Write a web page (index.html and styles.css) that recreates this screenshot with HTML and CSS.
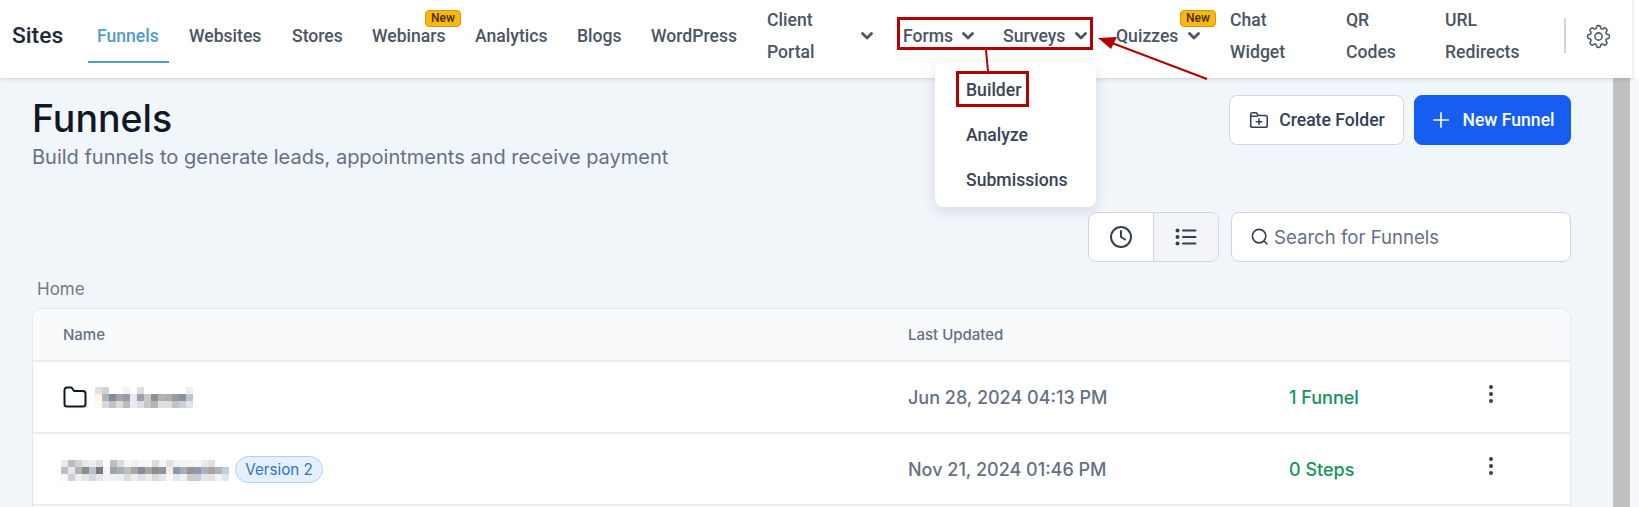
FILE: index.html
```html
<!DOCTYPE html>
<html lang="en">
<head>
<meta charset="utf-8">
<title>Sites - Funnels</title>
<link rel="stylesheet" href="styles.css">
</head>
<body>
<div class="shell">
  <header class="topbar">
    <div class="brand">Sites</div>
    <nav class="nav">
      <a class="nav-item active w-funnels">Funnels</a>
      <a class="nav-item w-websites">Websites</a>
      <a class="nav-item w-stores">Stores</a>
      <a class="nav-item w-webinars">Webinars<span class="new-badge">New</span></a>
      <a class="nav-item w-analytics">Analytics</a>
      <a class="nav-item w-blogs">Blogs</a>
      <a class="nav-item w-wordpress">WordPress</a>
      <a class="nav-item w-client"><span class="wrap-label">Client<br>Portal</span><svg class="chev" viewBox="0 0 12 8"><path d="M1.5 1.5 6 6l4.5-4.5"/></svg></a>
      <a class="nav-item w-forms">Forms<svg class="chev" viewBox="0 0 12 8"><path d="M1.5 1.5 6 6l4.5-4.5"/></svg></a>
      <a class="nav-item w-surveys">Surveys<svg class="chev" viewBox="0 0 12 8"><path d="M1.5 1.5 6 6l4.5-4.5"/></svg></a>
      <a class="nav-item w-quizzes">Quizzes<svg class="chev" viewBox="0 0 12 8"><path d="M1.5 1.5 6 6l4.5-4.5"/></svg><span class="new-badge quiz-badge">New</span></a>
      <a class="nav-item w-chat"><span class="wrap-label">Chat<br>Widget</span></a>
      <a class="nav-item w-qr"><span class="wrap-label">QR<br>Codes</span></a>
      <a class="nav-item w-url"><span class="wrap-label">URL<br>Redirects</span></a>
    </nav>
    <div class="divider"></div>
    <svg class="gear" viewBox="0 0 24 24"><path d="M10.343 3.94c.09-.542.56-.94 1.11-.94h1.093c.55 0 1.02.398 1.11.94l.149.894c.07.424.384.764.78.93.398.164.855.142 1.205-.108l.737-.527a1.125 1.125 0 0 1 1.45.12l.773.774c.39.389.44 1.002.12 1.45l-.527.737c-.25.35-.272.806-.107 1.204.165.397.505.71.93.78l.893.15c.543.09.94.56.94 1.109v1.094c0 .55-.397 1.02-.94 1.11l-.893.149c-.425.07-.765.383-.93.78-.165.398-.143.854.107 1.204l.527.738c.32.447.269 1.06-.12 1.45l-.774.773a1.125 1.125 0 0 1-1.449.12l-.738-.527c-.35-.25-.806-.272-1.203-.107-.397.165-.71.505-.781.929l-.149.894c-.09.542-.56.94-1.11.94h-1.094c-.55 0-1.019-.398-1.11-.94l-.148-.894c-.071-.424-.384-.764-.781-.93-.398-.164-.854-.142-1.204.108l-.738.527c-.447.32-1.06.269-1.45-.12l-.773-.774a1.125 1.125 0 0 1-.12-1.45l.527-.737c.25-.35.273-.806.108-1.204-.165-.397-.505-.71-.93-.78l-.894-.15c-.542-.09-.94-.56-.94-1.11v-1.094c0-.55.398-1.02.94-1.11l.894-.149c.424-.07.765-.383.93-.78.165-.398.143-.854-.107-1.204l-.527-.738a1.125 1.125 0 0 1 .12-1.45l.773-.773a1.125 1.125 0 0 1 1.45-.12l.737.527c.35.25.807.272 1.204.107.397-.165.71-.505.78-.929l.15-.894Z"/><circle cx="12" cy="12" r="3"/></svg>
  </header>

  <div class="below">
    <main class="content">
      <section class="title-row">
        <div class="titles">
          <h1>Funnels</h1>
          <p>Build funnels to generate leads, appointments and receive payment</p>
        </div>
        <div class="actions">
          <button class="btn btn-light"><svg class="btn-icon" viewBox="0 0 24 24"><path d="M3 8V6a2 2 0 0 1 2-2h4l2.5 3H19a2 2 0 0 1 2 2v9a2 2 0 0 1-2 2H5a2 2 0 0 1-2-2V8Zm0 0h6.5l2-1M12 11v6M9 14h6"/></svg>Create Folder</button>
          <button class="btn btn-primary"><svg class="btn-icon" viewBox="0 0 24 24"><path d="M12 4v16M4 12h16"/></svg>New Funnel</button>
        </div>
      </section>

      <section class="tools-row">
        <div class="toggle">
          <span class="toggle-cell"><svg class="tool-icon" viewBox="0 0 24 24"><circle cx="12" cy="12" r="10"/><path d="M12 6v6l4 2.5"/></svg></span>
          <span class="toggle-cell selected"><svg class="tool-icon list-icon" viewBox="0 0 24 24"><path d="M9 5.500h12.500M9 12h12.500M9 18.500h12.500"/><circle class="dot" cx="3.500" cy="5.500" r="2"/><circle class="dot" cx="3.500" cy="12" r="2"/><circle class="dot" cx="3.500" cy="18.500" r="2"/></svg></span>
        </div>
        <div class="search"><svg class="search-icon" viewBox="0 0 24 24"><circle cx="11.500" cy="11.500" r="8.500"/><path d="m18 18 3.500 3.500"/></svg><span>Search for Funnels</span></div>
      </section>

      <div class="crumb">Home</div>

      <section class="table">
        <div class="row head"><span class="col-name">Name</span><span class="col-date">Last Updated</span></div>
        <div class="row">
          <span class="col-name name-cell">
            <svg class="folder" viewBox="0 0 24 22"><path d="M1.500 5V4a2.500 2.500 0 0 1 2.500-2.500h4.500L11 5h9a2.500 2.500 0 0 1 2.500 2.500v10.500a2.500 2.500 0 0 1-2.500 2.500H4a2.500 2.500 0 0 1-2.500-2.500V5Z"/></svg>
            <svg class="mosaic m1" viewBox="0 0 14 3" shape-rendering="crispEdges">
              <rect x="0" y="0" width="1" height="1" fill="#e0e0e0"/><rect x="1" y="0" width="1" height="1" fill="#cfd3d8"/><rect x="4" y="0" width="1" height="1" fill="#f5f3f2"/><rect x="6" y="0" width="1" height="1" fill="#dddddd"/><rect x="13" y="0" width="1" height="1" fill="#efefef"/>
              <rect x="0" y="1" width="1" height="1" fill="#fff5ea"/><rect x="1" y="1" width="1" height="1" fill="#aeb4bb"/><rect x="2" y="1" width="1" height="1" fill="#858a96"/><rect x="3" y="1" width="1" height="1" fill="#a3a5aa"/><rect x="4" y="1" width="1" height="1" fill="#9e9c9e"/><rect x="5" y="1" width="1" height="1" fill="#e2ebf3"/><rect x="6" y="1" width="1" height="1" fill="#a0a2a6"/><rect x="7" y="1" width="1" height="1" fill="#c9c9c9"/><rect x="8" y="1" width="1" height="1" fill="#8e9095"/><rect x="9" y="1" width="1" height="1" fill="#b0b5bb"/><rect x="10" y="1" width="1" height="1" fill="#adadb0"/><rect x="11" y="1" width="1" height="1" fill="#9a9ca2"/><rect x="12" y="1" width="1" height="1" fill="#8a93a0"/><rect x="13" y="1" width="1" height="1" fill="#c2c5c8"/>
              <rect x="0" y="2" width="1" height="1" fill="#fff8f0"/><rect x="1" y="2" width="1" height="1" fill="#d5d8dc"/><rect x="2" y="2" width="1" height="1" fill="#bcc0c8"/><rect x="3" y="2" width="1" height="1" fill="#dcdcdc"/><rect x="4" y="2" width="1" height="1" fill="#bdbbbc"/><rect x="5" y="2" width="1" height="1" fill="#e6eef5"/><rect x="6" y="2" width="1" height="1" fill="#dedede"/><rect x="7" y="2" width="1" height="1" fill="#c7c7c9"/><rect x="8" y="2" width="1" height="1" fill="#b0b5ba"/><rect x="9" y="2" width="1" height="1" fill="#e0e0e2"/><rect x="10" y="2" width="1" height="1" fill="#dfdfdf"/><rect x="11" y="2" width="1" height="1" fill="#c3c2c2"/><rect x="12" y="2" width="1" height="1" fill="#c9d0d6"/><rect x="13" y="2" width="1" height="1" fill="#e3e4e6"/>
            </svg>
          </span>
          <span class="col-date date-cell">Jun 28, 2024 04:13 PM</span>
          <span class="col-count">1 Funnel</span>
          <svg class="more" viewBox="0 0 6 20"><circle cx="3" cy="3" r="2"/><circle cx="3" cy="10" r="2"/><circle cx="3" cy="17" r="2"/></svg>
        </div>
        <div class="row">
          <span class="col-name name-cell tight">
            <svg class="mosaic m2" viewBox="0 0 24 3" shape-rendering="crispEdges">
              <rect x="0" y="0" width="1" height="1" fill="#e8e8e8"/><rect x="1" y="0" width="1" height="1" fill="#b8bcc2"/><rect x="2" y="0" width="1" height="1" fill="#d0d5dc"/><rect x="3" y="0" width="1" height="1" fill="#e6e8ea"/><rect x="4" y="0" width="1" height="1" fill="#eeeeee"/><rect x="5" y="0" width="1" height="1" fill="#dcdde0"/><rect x="7" y="0" width="1" height="1" fill="#bcbec2"/><rect x="8" y="0" width="1" height="1" fill="#d8dde2"/><rect x="9" y="0" width="1" height="1" fill="#f7f7f7"/><rect x="10" y="0" width="1" height="1" fill="#f0f0f0"/><rect x="11" y="0" width="1" height="1" fill="#f8f8f8"/><rect x="12" y="0" width="1" height="1" fill="#f6f6f6"/><rect x="13" y="0" width="1" height="1" fill="#dcdcdc"/><rect x="14" y="0" width="1" height="1" fill="#fbf4ec"/><rect x="15" y="0" width="1" height="1" fill="#d8e2ea"/><rect x="16" y="0" width="1" height="1" fill="#f0f2f4"/><rect x="17" y="0" width="1" height="1" fill="#f4f4f4"/><rect x="18" y="0" width="1" height="1" fill="#f6f6f6"/><rect x="19" y="0" width="1" height="1" fill="#f8f8f8"/><rect x="20" y="0" width="1" height="1" fill="#ece8e6"/><rect x="21" y="0" width="1" height="1" fill="#dbe0e6"/>
              <rect x="0" y="1" width="1" height="1" fill="#c0bec2"/><rect x="1" y="1" width="1" height="1" fill="#e8e8ea"/><rect x="2" y="1" width="1" height="1" fill="#aeb2ba"/><rect x="3" y="1" width="1" height="1" fill="#8a8c92"/><rect x="4" y="1" width="1" height="1" fill="#b8c2cc"/><rect x="5" y="1" width="1" height="1" fill="#787a80"/><rect x="6" y="1" width="1" height="1" fill="#f2f6f9"/><rect x="7" y="1" width="1" height="1" fill="#a0a2a8"/><rect x="8" y="1" width="1" height="1" fill="#acb0b4"/><rect x="9" y="1" width="1" height="1" fill="#bcc0c4"/><rect x="10" y="1" width="1" height="1" fill="#a8a6a6"/><rect x="11" y="1" width="1" height="1" fill="#868c9a"/><rect x="12" y="1" width="1" height="1" fill="#a4a6a8"/><rect x="13" y="1" width="1" height="1" fill="#8e8e90"/><rect x="14" y="1" width="1" height="1" fill="#9094a4"/><rect x="15" y="1" width="1" height="1" fill="#f6ede2"/><rect x="16" y="1" width="1" height="1" fill="#8e98a8"/><rect x="17" y="1" width="1" height="1" fill="#a8aeb6"/><rect x="18" y="1" width="1" height="1" fill="#989494"/><rect x="19" y="1" width="1" height="1" fill="#9498a8"/><rect x="20" y="1" width="1" height="1" fill="#acb2ba"/><rect x="21" y="1" width="1" height="1" fill="#aaa4a2"/><rect x="22" y="1" width="1" height="1" fill="#b0b4bc"/><rect x="23" y="1" width="1" height="1" fill="#c0cfdc"/>
              <rect x="0" y="2" width="1" height="1" fill="#fbf8f4"/><rect x="1" y="2" width="1" height="1" fill="#cdd0d5"/><rect x="2" y="2" width="1" height="1" fill="#eeeeee"/><rect x="3" y="2" width="1" height="1" fill="#e8e6e4"/><rect x="4" y="2" width="1" height="1" fill="#d2d8de"/><rect x="5" y="2" width="1" height="1" fill="#e6e6e8"/><rect x="6" y="2" width="1" height="1" fill="#f0f3f7"/><rect x="7" y="2" width="1" height="1" fill="#eef0f4"/><rect x="8" y="2" width="1" height="1" fill="#f0eeec"/><rect x="9" y="2" width="1" height="1" fill="#d6dde2"/><rect x="10" y="2" width="1" height="1" fill="#ececec"/><rect x="11" y="2" width="1" height="1" fill="#dde1e8"/><rect x="12" y="2" width="1" height="1" fill="#ececec"/><rect x="13" y="2" width="1" height="1" fill="#d8d8d8"/><rect x="14" y="2" width="1" height="1" fill="#e4e8ee"/><rect x="15" y="2" width="1" height="1" fill="#fdf9f4"/><rect x="16" y="2" width="1" height="1" fill="#e4e8ec"/><rect x="17" y="2" width="1" height="1" fill="#eef0f2"/><rect x="18" y="2" width="1" height="1" fill="#d0ccc6"/><rect x="19" y="2" width="1" height="1" fill="#c4cfda"/><rect x="20" y="2" width="1" height="1" fill="#e6e6e8"/><rect x="21" y="2" width="1" height="1" fill="#e4e2e4"/><rect x="22" y="2" width="1" height="1" fill="#f4f4f4"/><rect x="23" y="2" width="1" height="1" fill="#dfe5ea"/>
            </svg>
            <span class="version">Version 2</span>
          </span>
          <span class="col-date date-cell">Nov 21, 2024 01:46 PM</span>
          <span class="col-count">0 Steps</span>
          <svg class="more" viewBox="0 0 6 20"><circle cx="3" cy="3" r="2"/><circle cx="3" cy="10" r="2"/><circle cx="3" cy="17" r="2"/></svg>
        </div>
      </section>
    </main>
    <div class="scrollbar"></div>
    <div class="gutter"></div>
  </div>
</div>

<div class="dropdown">
  <a class="drop-item">Builder</a>
  <a class="drop-item">Analyze</a>
  <a class="drop-item">Submissions</a>
</div>

<div class="mark mark-tabs"></div>
<div class="mark mark-builder"></div>
<svg class="annot" viewBox="0 0 1639 507">
  <path class="annot-line" d="M986 50 988 71"/>
  <path class="annot-line" d="M1207 79 1112 43"/>
  <path class="annot-head" d="M1098 38 1117 37 1111 49Z"/>
</svg>
</body>
</html>
```
FILE: styles.css
```css
* { box-sizing: border-box; }
html, body { margin: 0; height: 507px; overflow: hidden; background: #fff; }
body { font-family: Roboto, "Liberation Sans", sans-serif; position: relative; }
.shell { display: flex; flex-direction: column; height: 507px; }

.topbar {
  flex: 0 0 78px; width: 1632px; display: flex; align-items: center; position: relative; z-index: 2;
  background: #fff; box-shadow: 0 1px 4px rgba(60, 70, 85, .22); padding-left: 12px;
}
.brand { font-size: 22.800px; font-weight: 500; color: #1f2937; width: 76px; margin-top: -7px; }
.nav { display: flex; align-items: center; height: 78px; font-size: 17.600px; font-weight: 500; color: #4b5563; }
.nav-item { position: relative; display: flex; align-items: center; height: 78px; padding: 0 0 7px 9px; white-space: nowrap; }
.nav-item.active { color: #4f9dcc; }
.nav-item.active::after { content: ""; position: absolute; left: 0; right: 0; top: 61px; height: 2px; background: #4f9dcc; }
.w-funnels { width: 81px; }
.w-websites { margin-left: 11px; width: 91px; }
.w-stores { margin-left: 12px; width: 68px; }
.w-webinars { margin-left: 12px; width: 91px; }
.w-analytics { margin-left: 12px; width: 90px; }
.w-blogs { margin-left: 12px; width: 62px; }
.w-wordpress { margin-left: 12px; width: 104px; }
.w-client { margin-left: 12px; width: 126px; }
.w-forms { margin-left: 10px; width: 100px; }
.w-surveys { width: 113px; }
.w-quizzes { width: 114px; }
.w-chat { margin-left: 0; width: 116px; }
.w-qr { width: 99px; }
.w-url { width: 120px; }
.wrap-label { line-height: 32px; }
.w-client .chev { position: absolute; left: 103px; }
.w-forms .chev { margin-left: 9px; }
.w-surveys .chev { margin-left: 10px; }
.w-quizzes .chev { margin-left: 10px; }
.chev { width: 12px; height: 8px; fill: none; stroke: #4b5563; stroke-width: 2.800; stroke-linecap: round; stroke-linejoin: round; }
.new-badge {
  position: absolute; left: 62px; top: 10px; width: 36px; height: 17px; border: 1px solid #d29a08; border-radius: 4px;
  background: #fdb60d; color: #3c3205; font-size: 12px; font-weight: 500; line-height: 15px; text-align: center;
}
.quiz-badge { left: 73px; }
.divider { position: absolute; left: 1564px; top: 18px; width: 2px; height: 35px; background: #d1d5db; }
.gear { position: absolute; left: 1584px; top: 22px; width: 29px; height: 29px; fill: none; stroke: #4b5563; stroke-width: 1.250; }

.below { flex: 1; display: flex; min-height: 0; }
.content { flex: 0 0 1613px; background: #f1f6fa; padding: 0 42px 0 32px; display: flex; flex-direction: column; }
.scrollbar { flex: 0 0 17px; background: #c0c0c0; }
.gutter { flex: 1; background: #f5f7fa; }

.title-row { display: flex; justify-content: space-between; padding-top: 19px; height: 134px; }
.titles h1 { margin: 0; font: 500 37.500px/44px Inter, sans-serif; color: #101828; }
.titles p { margin: 4px 0 0; font: 400 20px/24px Inter, sans-serif; color: #667085; }
.actions { display: flex; gap: 10px; margin-top: -2px; }
.btn { height: 50px; display: flex; align-items: center; justify-content: center; border-radius: 8px; font: 500 17.600px Roboto, sans-serif; cursor: pointer; }
.btn-light { width: 175px; background: #fff; color: #344054; border: 1px solid #d0d5dd; }
.btn-primary { width: 157px; background: #155eef; color: #fff; border: 1px solid #155eef; }
.btn-icon { width: 22px; height: 22px; margin-right: 9px; fill: none; stroke: currentColor; stroke-width: 1.700; stroke-linecap: round; stroke-linejoin: round; }
.btn-primary .btn-icon { margin-right: 10px; }

.tools-row { display: flex; justify-content: flex-end; gap: 12px; height: 50px; }
.toggle { display: flex; width: 131px; height: 50px; border: 1px solid #d0d5dd; border-radius: 8px; overflow: hidden; background: #fff; }
.toggle-cell { flex: 1; display: flex; align-items: center; justify-content: center; }
.toggle-cell.selected { background: #f2f4f7; border-left: 1px solid #d0d5dd; }
.tool-icon { width: 24px; height: 24px; fill: none; stroke: #344054; stroke-width: 2; stroke-linecap: round; stroke-linejoin: round; }
.list-icon .dot { fill: #344054; stroke: none; }
.search { width: 340px; height: 50px; display: flex; align-items: center; padding: 0 0 1px 18px; background: #fff; border: 1px solid #d0d5dd; border-radius: 8px; font: 400 18.600px Inter, sans-serif; color: #667085; }
.search-icon { width: 19px; height: 19px; margin-right: 5px; fill: none; stroke: #344054; stroke-width: 2; stroke-linecap: round; }

.crumb { margin: 15px 0 0 5px; font: 400 17px/24px Inter, sans-serif; color: #7a7a7a; height: 18px; }
.table { margin-top: 13px; background: #fff; border: 1px solid #e4e7ec; border-bottom: 0; border-radius: 10px 10px 0 0; overflow: hidden; flex: 1; }
.row { position: relative; display: flex; align-items: center; height: 72px; border-bottom: 2px solid #eaecf0; }
.row.head { height: 53px; background: #f9fafb; font: 500 15px Inter, sans-serif; color: #667085; }
.col-name { width: 875px; padding-left: 30px; flex: none; }
.name-cell { display: flex; align-items: center; }
.name-cell.tight { padding-left: 28px; }
.folder { width: 24px; height: 22px; margin-right: 8px; fill: none; stroke: #101828; stroke-width: 2; stroke-linejoin: round; }
.mosaic { display: block; height: 21px; }
.m1 { width: 98px; }
.m2 { width: 168px; margin-top: 3px; }
.version { margin-left: 6px; height: 27px; width: 88px; border: 1px solid #b2d0f2; border-radius: 14px; background: #e6f0fc; color: #2f74c8; font: 400 15.200px/25px Inter, sans-serif; text-align: center; }
.col-date { width: 381px; flex: none; }
.date-cell { font: 500 18px Inter, sans-serif; color: #667085; }
.col-count { font: 500 18px Inter, sans-serif; color: #16935c; }
.more { position: absolute; left: 1455px; top: 22px; width: 6px; height: 20px; fill: #344054; }

.dropdown {
  position: absolute; left: 935px; top: 62px; width: 161px; height: 145px; z-index: 3; background: #fff; border-radius: 8px;
  box-shadow: 0 4px 14px rgba(60, 70, 85, .16); padding: 6px 0 0 31px; display: flex; flex-direction: column;
}
.drop-item { height: 45px; line-height: 45px; font-size: 17.600px; font-weight: 500; color: #3a4454; }

.mark { position: absolute; z-index: 4; border: 3px solid #b30000; pointer-events: none; }
.mark-tabs { left: 897px; top: 17px; width: 196px; height: 33px; }
.mark-builder { left: 956px; top: 71px; width: 73px; height: 36px; }
.annot { position: absolute; left: 0; top: 0; width: 1639px; height: 507px; z-index: 5; pointer-events: none; }
.annot-line { stroke: #b30000; stroke-width: 2; fill: none; }
.annot-head { fill: #b30000; }
```
